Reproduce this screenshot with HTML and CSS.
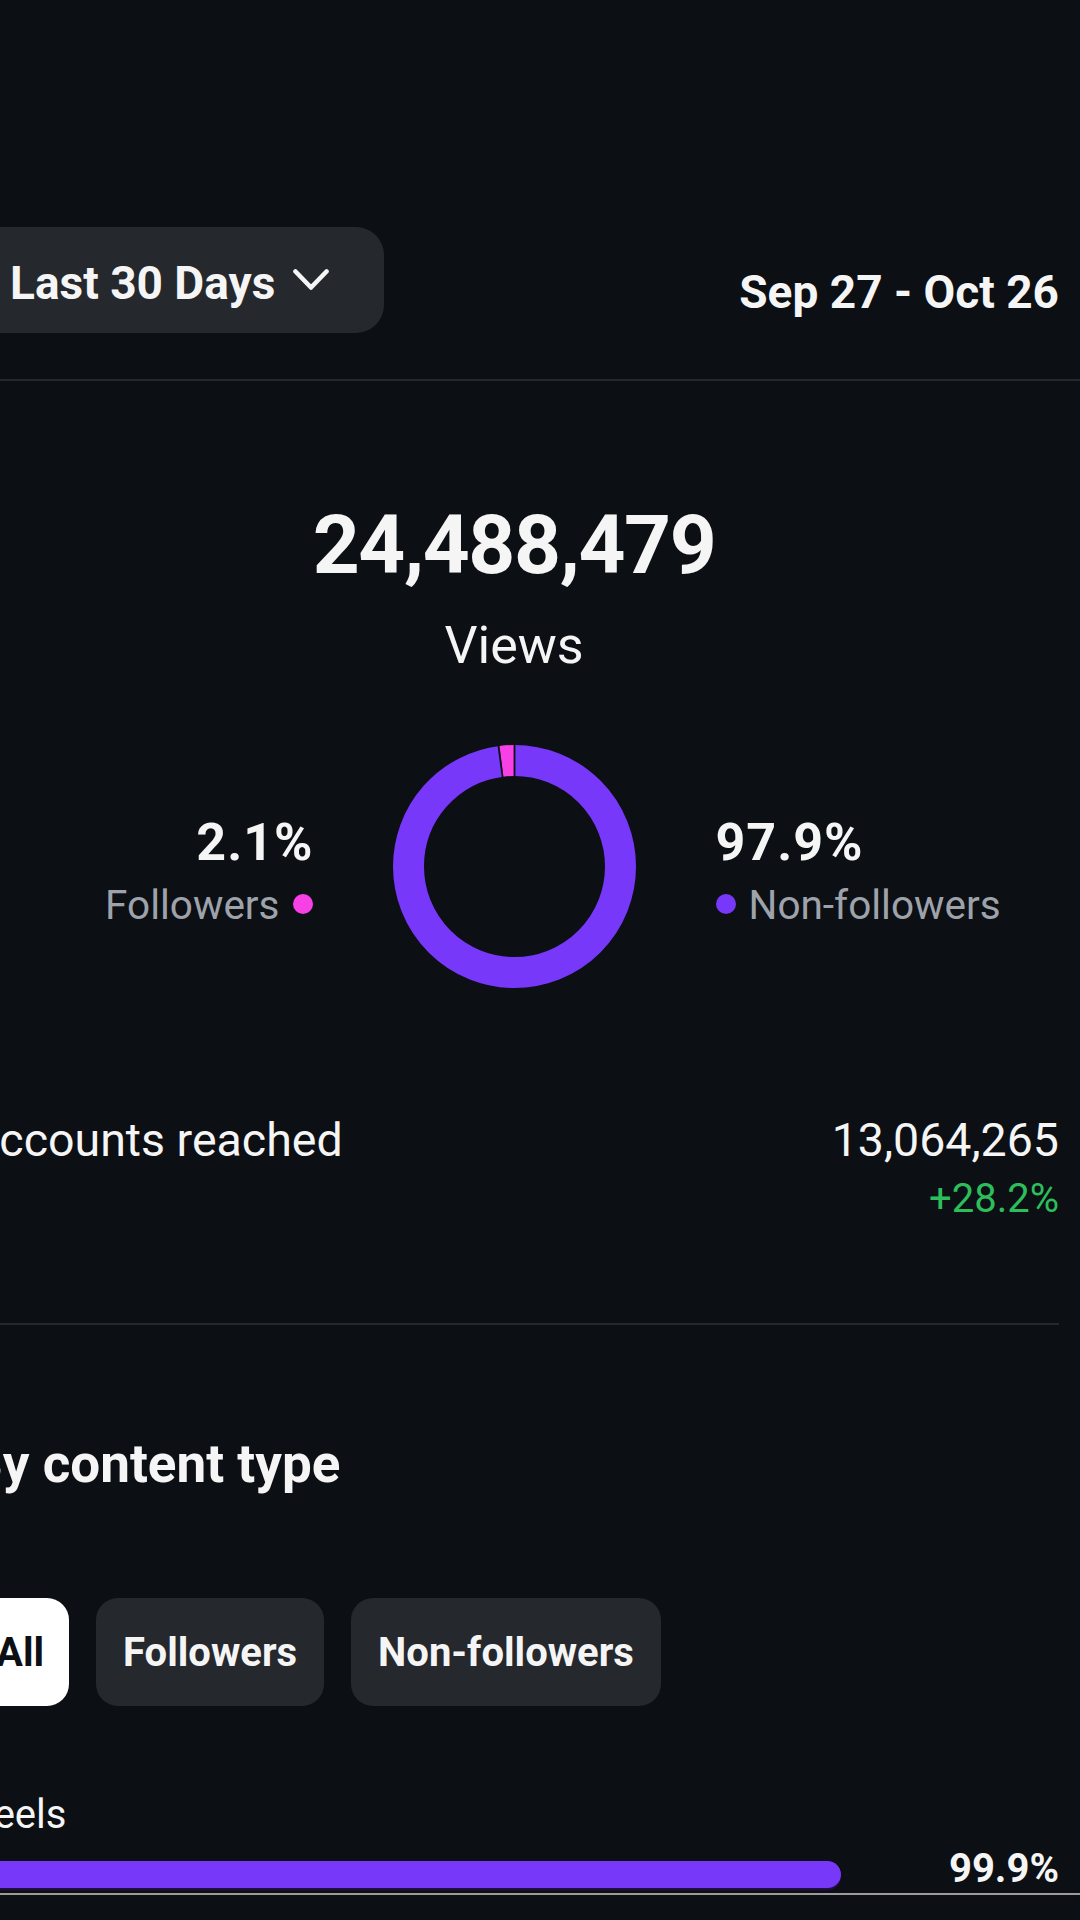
FILE: index.html
```html
<!DOCTYPE html>
<html lang="en">
<head>
<meta charset="utf-8">
<title>Views insights</title>
<link rel="stylesheet" href="styles.css">
</head>
<body>
<div class="screen">
  <header class="range-bar">
    <button class="range-btn" type="button">
      <span>Last 30 Days</span>
      <svg class="chev" width="36" height="22" viewBox="0 0 36 22" aria-hidden="true">
        <path d="M2.5 2.5 L18 18.5 L33.5 2.5" fill="none" stroke="#f5f5f5" stroke-width="4.6" stroke-linecap="round" stroke-linejoin="round"/>
      </svg>
    </button>
    <div class="range-dates">Sep 27 - Oct 26</div>
  </header>
  <div class="rule rule-full"></div>

  <main class="content">
    <div class="total">24,488,479</div>
    <div class="total-label">Views</div>

    <section class="split">
      <div class="split-col split-left">
        <div class="split-pct">2.1%</div>
        <div class="split-label">Followers <span class="dot dot-pink"></span></div>
      </div>
      <svg class="donut" width="243" height="243" viewBox="0 0 243 243" aria-hidden="true">
        <circle cx="121.5" cy="121.5" r="106" fill="none" stroke="#7738fa" stroke-width="31" stroke-dasharray="652.03 666.02" transform="rotate(-90 121.5 121.5)"/>
        <circle cx="121.5" cy="121.5" r="106" fill="none" stroke="#f740e6" stroke-width="31" stroke-dasharray="13.99 666.02" stroke-dashoffset="-652.03" transform="rotate(-90 121.5 121.5)"/>
        <line x1="121.5" y1="-2" x2="121.5" y2="33" stroke="#0c0f14" stroke-width="1.8"/>
        <line x1="105.31" y1="-0.43" x2="109.79" y2="33.27" stroke="#0c0f14" stroke-width="1.8"/>
      </svg>
      <div class="split-col split-right">
        <div class="split-pct">97.9%</div>
        <div class="split-label"><span class="dot dot-purple"></span> Non-followers</div>
      </div>
    </section>

    <section class="reach">
      <div class="reach-label">Accounts reached</div>
      <div class="reach-values">
        <div class="reach-num">13,064,265</div>
        <div class="reach-change">+28.2%</div>
      </div>
    </section>

    <div class="rule"></div>

    <h2 class="section-title">By content type</h2>

    <div class="chips">
      <button class="chip chip-active" type="button">All</button>
      <button class="chip" type="button">Followers</button>
      <button class="chip" type="button">Non-followers</button>
    </div>

    <div class="type-label">Reels</div>
    <div class="bar-row">
      <div class="bar-track"><div class="bar-fill" style="width: 99.9%"></div></div>
      <div class="bar-pct">99.9%</div>
    </div>
  </main>
  <div class="nav-edge"></div>
</div>
</body>
</html>
```

FILE: styles.css
```css
html, body {
  margin: 0;
  padding: 0;
}
body {
  width: 1080px;
  height: 1920px;
  overflow: hidden;
  background: #0c0f14;
  color: #f5f5f5;
  font-family: "Roboto", "Liberation Sans", sans-serif;
}
.screen {
  width: 1132px;
  margin-left: -52px;
  padding-top: 227px;
}
.range-bar {
  display: flex;
  justify-content: space-between;
  align-items: flex-start;
  padding: 0 21px;
  height: 106px;
}
.range-btn {
  display: flex;
  align-items: center;
  gap: 18px;
  height: 106px;
  box-sizing: border-box;
  padding: 29px 55px 23px 41px;
  border: 0;
  border-radius: 28px;
  background: #25282d;
  color: #f5f5f5;
  font-family: inherit;
  font-size: 46px;
  font-weight: 700;
  line-height: 54px;
}
.chev {
  display: block;
  margin-top: -6px;
}
.range-dates {
  padding-top: 38px;
  font-size: 46px;
  font-weight: 700;
  line-height: 54px;
}
.rule {
  height: 2px;
  background: #25272c;
}
.rule-full {
  margin-top: 46px;
}
.content {
  padding: 0 21px;
}
.total {
  margin-top: 116px;
  text-align: center;
  font-size: 82px;
  font-weight: 700;
  line-height: 96px;
  letter-spacing: -1.4px;
}
.total-label {
  margin-top: 23px;
  text-align: center;
  font-size: 52px;
  line-height: 60px;
}
.split {
  margin-top: 69px;
  display: grid;
  grid-template-columns: 1fr 243px 1fr;
  column-gap: 80px;
  align-items: start;
}
.donut {
  display: block;
}
.split-col {
  margin-top: 68px;
  display: flex;
  flex-direction: column;
  gap: 9px;
}
.split-left {
  align-items: flex-end;
  text-align: right;
}
.split-right {
  align-items: flex-start;
}
.split-pct {
  font-size: 52px;
  font-weight: 700;
  line-height: 60px;
  letter-spacing: 1px;
}
.split-left .split-pct {
  margin-right: -1px;
}
.split-label {
  display: flex;
  align-items: center;
  gap: 13px;
  font-size: 40.5px;
  line-height: 46px;
  color: #9ea3ab;
}
.dot {
  width: 20px;
  height: 20px;
  border-radius: 50%;
  margin-top: -2px;
  flex: none;
}
.dot-pink {
  background: #f740e6;
}
.dot-purple {
  background: #7738fa;
}
.reach {
  margin-top: 125px;
  display: flex;
  justify-content: space-between;
  align-items: flex-start;
}
.reach-label {
  font-size: 46.5px;
  line-height: 54px;
}
.reach-values {
  display: flex;
  flex-direction: column;
  align-items: flex-end;
  gap: 8px;
}
.reach-num {
  font-size: 46.5px;
  line-height: 54px;
}
.reach-change {
  font-size: 40px;
  line-height: 48px;
  color: #2dbe5c;
}
.content .rule {
  margin-top: 100px;
}
.section-title {
  margin: 108px 0 0;
  font-size: 53px;
  font-weight: 700;
  line-height: 62px;
}
.chips {
  margin-top: 103px;
  display: flex;
  gap: 27px;
}
.chip {
  height: 108px;
  padding: 0 27px;
  border: 0;
  border-radius: 22px;
  background: #25282d;
  color: #f5f5f5;
  font-family: inherit;
  font-size: 40px;
  font-weight: 700;
}
.chip-active {
  background: #ffffff;
  color: #0c0f14;
  padding-right: 25px;
}
.type-label {
  margin-top: 85px;
  font-size: 40px;
  line-height: 48px;
}
.bar-row {
  margin-top: 6px;
  display: flex;
  align-items: flex-end;
  justify-content: space-between;
  height: 48px;
}
.bar-track {
  width: 873px;
  margin-bottom: 5px;
}
.bar-fill {
  height: 27px;
  border-radius: 14px;
  background: #7738fa;
  box-shadow: 0 2px 2px rgba(50, 20, 110, 0.6);
}
.bar-pct {
  font-size: 40px;
  font-weight: 700;
  line-height: 48px;
}
.nav-edge {
  height: 2px;
  background: #9b9b9b;
}
```
